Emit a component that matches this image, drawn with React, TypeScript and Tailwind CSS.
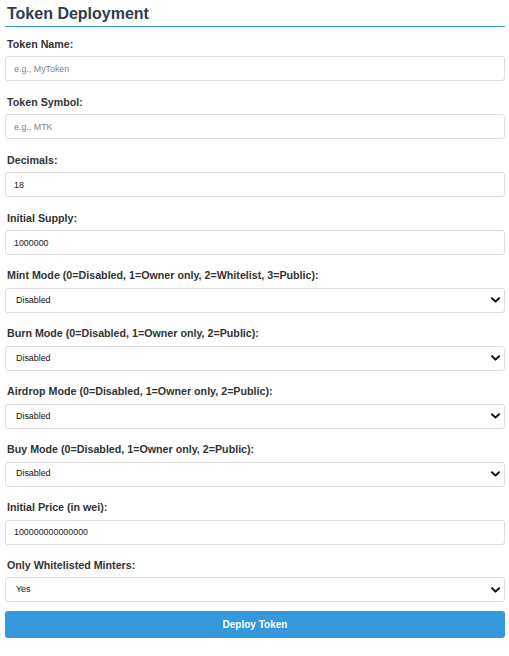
import React, { useState } from 'react';

const font = { fontFamily: '"Liberation Sans", Arial, sans-serif' };

type Field =
    | { kind: 'input'; label: string; placeholder?: string; value?: string }
    | { kind: 'select'; label: string; options: string[]; value: string };

const fields: Field[] = [
    { kind: 'input', label: 'Token Name:', placeholder: 'e.g., MyToken' },
    { kind: 'input', label: 'Token Symbol:', placeholder: 'e.g., MTK' },
    { kind: 'input', label: 'Decimals:', value: '18' },
    { kind: 'input', label: 'Initial Supply:', value: '1000000' },
    {
        kind: 'select',
        label: 'Mint Mode (0=Disabled, 1=Owner only, 2=Whitelist, 3=Public):',
        options: ['Disabled', 'Owner only', 'Whitelist', 'Public'],
        value: 'Disabled',
    },
    {
        kind: 'select',
        label: 'Burn Mode (0=Disabled, 1=Owner only, 2=Public):',
        options: ['Disabled', 'Owner only', 'Public'],
        value: 'Disabled',
    },
    {
        kind: 'select',
        label: 'Airdrop Mode (0=Disabled, 1=Owner only, 2=Public):',
        options: ['Disabled', 'Owner only', 'Public'],
        value: 'Disabled',
    },
    {
        kind: 'select',
        label: 'Buy Mode (0=Disabled, 1=Owner only, 2=Public):',
        options: ['Disabled', 'Owner only', 'Public'],
        value: 'Disabled',
    },
    { kind: 'input', label: 'Initial Price (in wei):', value: '100000000000000' },
    { kind: 'select', label: 'Only Whitelisted Minters:', options: ['Yes', 'No'], value: 'Yes' },
];

function Chevron() {
    return (
        <svg
            className="pointer-events-none absolute right-[5px] top-1/2 -translate-y-1/2"
            width="9"
            height="6"
            viewBox="0 0 9 6"
            fill="none"
        >
            <path d="M1 1.2 L4.5 4.6 L8 1.2" stroke="#111" strokeWidth="2" strokeLinecap="round" strokeLinejoin="round" />
        </svg>
    );
}

export default function App() {
    const [values, setValues] = useState<string[]>(fields.map(f => (f.kind === 'select' ? f.value : f.value ?? '')));

    const update = (i: number, v: string) => setValues(prev => prev.map((p, j) => (j === i ? v : p)));

    return (
        <div className="min-h-screen bg-white pl-[5px] pr-[4px]" style={font}>
            {/* Header */}
            <h2 className="pt-[4.4px] pb-[3px] border-b border-[#3a8fd0] text-[16px] leading-[19px] font-bold text-[#2c3e50] pl-[2px]">
                Token Deployment
            </h2>

            <form className="mt-[10.5px]" onSubmit={e => e.preventDefault()}>
                {fields.map((f, i) => (
                    <div key={f.label} className="mb-[14.4px]">
                        <label className="block pl-[2px] mb-[5.5px] text-[10.7px] leading-[13px] font-bold text-[#333]">
                            {f.label}
                        </label>
                        {f.kind === 'input' ? (
                            <input
                                type="text"
                                value={values[i]}
                                placeholder={f.placeholder}
                                onChange={e => update(i, e.target.value)}
                                className="block w-full h-[25px] px-[8px] border border-[#ddd] rounded-[3px] text-[8.9px] text-[#222] placeholder:text-[#7b7f86] outline-none"
                            />
                        ) : (
                            <div className="relative">
                                <select
                                    value={values[i]}
                                    onChange={e => update(i, e.target.value)}
                                    className="block w-full h-[25px] pl-[10px] pr-[20px] border border-[#ddd] rounded-[3px] text-[8.9px] text-[#111] bg-white appearance-none outline-none"
                                >
                                    {f.options.map(o => (
                                        <option key={o} value={o}>{o}</option>
                                    ))}
                                </select>
                                <Chevron />
                            </div>
                        )}
                    </div>
                ))}

                <button
                    type="submit"
                    className="-mt-[5.4px] block w-full h-[27px] rounded-[3px] bg-[#3498db] text-white text-[10px] font-bold"
                >
                    Deploy Token
                </button>
            </form>
        </div>
    );
}
